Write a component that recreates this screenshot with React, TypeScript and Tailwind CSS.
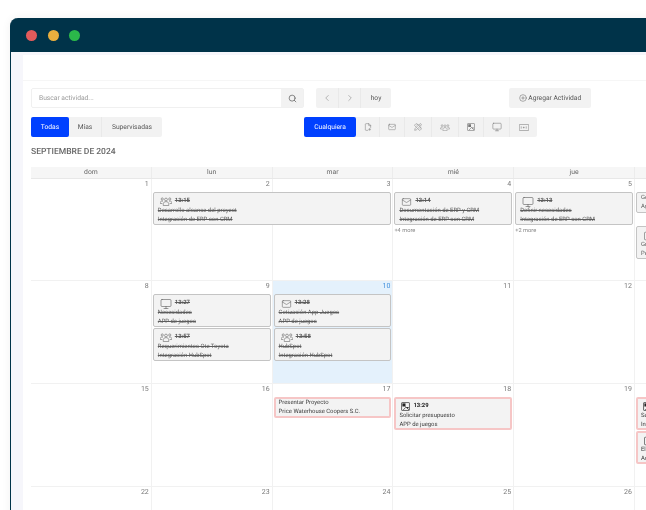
import React from "react";
import { ChevronLeft, ChevronRight, CirclePlus, Search, Mail, Monitor, FilePlus2, PencilRuler } from "lucide-react";

type IconKind = "group" | "mail" | "monitor" | "photo" | "doc";

function Group({ className }: { className?: string }) {
  return (
    <svg viewBox="0 0 24 18" fill="none" stroke="currentColor" strokeWidth="1.1" className={className}>
      <circle cx="12" cy="5" r="2.8" />
      <circle cx="4.5" cy="4" r="2.2" />
      <circle cx="19.5" cy="4" r="2.2" />
      <path d="M6.5 17v-3.5c0-2.6 2.4-4.2 5.5-4.2s5.500 1.600 5.500 4.200V17z" />
      <path d="M6 8.600C5.300 8.200 4.800 8 4 8c-2 0-3.500 1.400-3.500 3.400V13h4" />
      <path d="M18 8.600c.7-.4 1.200-.6 2-.6 2 0 3.500 1.400 3.500 3.400V13h-4" />
    </svg>
  );
}

function Photo({ className }: { className?: string }) {
  return (
    <svg viewBox="0 0 16 16" fill="none" stroke="currentColor" strokeWidth="1.2" className={className}>
      <rect x="1" y="1" width="14" height="14" rx="1" />
      <rect x="2.500" y="2.500" width="5.500" height="5.500" fill="currentColor" stroke="none" />
      <path d="M8 8l6 6M4 14l5-5" />
      <rect x="10" y="9" width="3.500" height="2" fill="currentColor" stroke="none" />
    </svg>
  );
}

function EventIcon({ kind }: { kind: IconKind }) {
  if (kind === "group") return <Group className="h-[9px] w-[12px]" />;
  if (kind === "mail") return <Mail className="h-[10px] w-[11px]" strokeWidth={1.3} />;
  if (kind === "monitor") return <Monitor className="h-[12px] w-[12px]" strokeWidth={1.2} />;
  if (kind === "photo") return <Photo className="h-[9px] w-[9px]" />;
  return <FilePlus2 className="h-[10px] w-[9px]" strokeWidth={1.5} />;
}

type Ev = {
  col: string;
  row: string;
  icon?: IconKind;
  time?: string;
  title: string;
  sub: string;
  done?: boolean;
  late?: boolean;
  self?: boolean;
};

function Event({ e }: { e: Ev }) {
  const pad = e.late
    ? e.icon
      ? "h-[33px] pl-[3px] pt-[2px]"
      : "h-[21px] pl-[3px] pt-0"
    : e.icon
      ? "h-[33px] pl-[4px] pt-[3px]"
      : "h-[21px] pl-[4px] pt-[1px]";
  return (
    <div
      className={`${e.col} ${e.row} z-10 ml-px mr-[2px] overflow-hidden whitespace-nowrap rounded-[2px] bg-[#f3f3f3] text-[5.900px] ${
        e.late
          ? "border-2 border-[#f6c6c6] text-[#3a3a3a]"
          : "border border-[#c4c4c4] text-[#5c5c5c]"
      } ${e.self ? "self-start" : ""} ${pad}`}
    >
      {e.icon && (
        <div className={`flex h-[11px] items-center gap-[3px] pl-[2px] ${e.late ? "text-[#222]" : "text-[#5c5c5c]"}`}>
          <EventIcon kind={e.icon} />
          <span className={`font-bold ${e.done ? "line-through" : ""}`}>{e.time}</span>
        </div>
      )}
      <div className={`h-[8.500px] leading-[8.500px] ${e.done ? "line-through" : ""}`}>{e.title}</div>
      <div className={`h-[8.500px] leading-[8.500px] ${e.done ? "line-through" : ""}`}>{e.sub}</div>
    </div>
  );
}

const colStarts = ["col-start-1", "col-start-2", "col-start-3", "col-start-4", "col-start-5", "col-start-6", "col-start-7"];

function Week({ days, events, more, today, first }: { days: number[]; events: Ev[]; more?: { col: string; text: string }[]; today?: number; first?: boolean }) {
  return (
    <div className={`grid ${first ? "h-[102px]" : "h-[103px]"} grid-cols-[repeat(7,120.8px)] grid-rows-[13px_34px_34px_1fr] border-b border-[#f1f1f1]`}>
      {days.map((d, i) => (
        <div
          key={d}
          className={`${colStarts[i]} row-start-1 row-end-5 border-r border-[#f1f1f1] pr-[2px] pt-[1px] text-right text-[7px] leading-[9px] ${
            today === d ? "bg-[#e4f1fc] text-[#3f8fdc]" : "text-[#777]"
          }`}
        >
          {d}
        </div>
      ))}
      {events.map((e, i) => (
        <Event key={i} e={e} />
      ))}
      {more?.map((m) => (
        <div key={m.text} className={`${m.col} row-start-3 z-10 pl-px pt-[1px] text-[5.700px] leading-[8px] text-[#888]`}>
          {m.text}
        </div>
      ))}
    </div>
  );
}

const erp = "Integración de ERP con CRM";
const hub = "Integración HubSpot";

function TabBtn({ children, className = "" }: { children: React.ReactNode; className?: string }) {
  return (
    <div className={`flex h-full items-center justify-center border-r border-[#e9e9e9] text-[#555] last:border-r-0 ${className}`}>
      {children}
    </div>
  );
}

export default function App() {
  return (
    <div className="h-[510px] w-[646px] overflow-hidden bg-white pl-[10px] pt-[18px] font-[family-name:Roboto,sans-serif] blur-[0.3px] [text-rendering:geometricPrecision]">
      <div className="h-[600px] w-[900px] overflow-hidden rounded-tl-[8px] border-l border-[#003349] bg-[#003349] shadow-[0_0_10px_rgba(0,0,0,0.06)]">
        <div className="flex h-[34px] items-center gap-[10.500px] pl-[15px]">
          <span className="size-[11px] rounded-full bg-[#e25b5b]" />
          <span className="size-[11px] rounded-full bg-[#e8ae3e]" />
          <span className="size-[11px] rounded-full bg-[#2bb84a]" />
        </div>
        <div className="h-full bg-[#f6f6fb] pl-[12px] pt-[3px]">
          <div className="h-full bg-white">
            <div className="h-[26px] border-b border-[#f6f6f6]" />
            <div className="pl-[8px] pt-[7px]">
              <div className="flex h-[20px] text-[6.700px] text-[#555]">
                <div className="flex w-[273px] rounded-[2px] border border-[#f0f0f0]">
                  <div className="flex-1 pl-[7px] leading-[18px] text-[#999]">Buscar actividad...</div>
                  <div className="flex w-[22px] items-center justify-center bg-[#f2f2f2]">
                    <Search className="size-[9px]" strokeWidth={1.8} />
                  </div>
                </div>
                <div className="ml-[12px] flex w-[75px] rounded-[2px] bg-[#f2f2f2]">
                  <TabBtn className="w-[23px]"><ChevronLeft className="size-[10px] text-[#777]" strokeWidth={1.2} /></TabBtn>
                  <TabBtn className="w-[22px]"><ChevronRight className="size-[10px] text-[#777]" strokeWidth={1.2} /></TabBtn>
                  <TabBtn className="w-[30px]">hoy</TabBtn>
                </div>
                <div className="ml-[118px] flex w-[82px] items-center justify-center gap-[1.500px] rounded-[2px] bg-[#f2f2f2]">
                  <CirclePlus className="size-[8px]" strokeWidth={1.4} />
                  Agregar Actividad
                </div>
              </div>

              <div className="mt-[9px] flex h-[20px] text-[6.700px]">
                <div className="flex w-[131px] rounded-[2px] bg-[#f2f2f2]">
                  <div className="flex w-[38px] items-center justify-center rounded-[2px] bg-[#0040ff] text-white">Todas</div>
                  <TabBtn className="w-[33px]">Mías</TabBtn>
                  <TabBtn className="w-[60px]">Supervisadas</TabBtn>
                </div>
                <div className="ml-[142px] flex w-[233px] rounded-[2px] bg-[#f2f2f2]">
                  <div className="flex w-[52px] items-center justify-center rounded-[2px] bg-[#0040ff] text-white">Cualquiera</div>
                  <TabBtn className="w-[24px]"><FilePlus2 className="size-[8px] text-[#777]" strokeWidth={1.5} /></TabBtn>
                  <TabBtn className="w-[25px]"><Mail className="size-[8px] text-[#777]" strokeWidth={1.4} /></TabBtn>
                  <TabBtn className="w-[27px]"><PencilRuler className="size-[8px] text-[#777]" strokeWidth={1.4} /></TabBtn>
                  <TabBtn className="w-[27px]"><Group className="h-[7px] w-[10px] text-[#777]" /></TabBtn>
                  <TabBtn className="w-[25px]"><Photo className="size-[8px] text-[#777]" /></TabBtn>
                  <TabBtn className="w-[26px]"><Monitor className="size-[10px] text-[#777]" strokeWidth={1.3} /></TabBtn>
                  <TabBtn className="w-[27px]">
                    <svg viewBox="0 0 18 12" fill="none" stroke="#777" strokeWidth="1" className="h-[7px] w-[10px]">
                      <rect x="0.500" y="0.500" width="17" height="11" rx="1" />
                      <path d="M4 4v4M7 6h3M8.500 4.500v3M13 4v4" />
                    </svg>
                  </TabBtn>
                </div>
              </div>

              <div className="mt-[10px] h-[11px] text-[8.500px] font-medium leading-[11px] text-[#666]">SEPTIEMBRE DE 2024</div>

              <div className="mt-[9px]">
                <div className="grid h-[12px] grid-cols-[repeat(7,120.8px)] border-b border-[#e8e8e8] bg-[#f6f6f6] text-center text-[6.800px] leading-[11px] text-[#666]">
                  {["dom", "lun", "mar", "mié", "jue", "vie", "sáb"].map((d) => (
                    <div key={d} className="border-r border-[#ececec]">{d}</div>
                  ))}
                </div>
                <Week
                  first
                  days={[1, 2, 3, 4, 5, 6, 7]}
                  more={[
                    { col: "col-start-4", text: "+4 more" },
                    { col: "col-start-5", text: "+2 more" },
                  ]}
                  events={[
                    { col: "col-start-2 col-end-4", row: "row-start-2", icon: "group", time: "13:15", title: "Desarrollo alcance del proyect", sub: erp, done: true },
                    { col: "col-start-4", row: "row-start-2", icon: "mail", time: "13:14", title: "Documentación de ERP y CRM", sub: erp, done: true },
                    { col: "col-start-5", row: "row-start-2", icon: "monitor", time: "13:13", title: "Definir necesidades", sub: erp, done: true },
                    { col: "col-start-6", row: "row-start-2", title: "Generar orden", sub: "Agencia", self: true },
                    { col: "col-start-6", row: "row-start-3", icon: "doc", time: "13:40", title: "Gran cierre", sub: "Petróleos" },
                  ]}
                />
                <Week
                  days={[8, 9, 10, 11, 12, 13, 14]}
                  today={10}
                  events={[
                    { col: "col-start-2", row: "row-start-2", icon: "monitor", time: "13:27", title: "Necesidades", sub: "APP de juegos", done: true },
                    { col: "col-start-3", row: "row-start-2", icon: "mail", time: "13:28", title: "Cotización App Juegos", sub: "APP de juegos", done: true },
                    { col: "col-start-2", row: "row-start-3", icon: "group", time: "13:57", title: "Requerimientos Ote Toyota", sub: hub, done: true },
                    { col: "col-start-3", row: "row-start-3", icon: "group", time: "13:58", title: "HubSpot", sub: hub, done: true },
                  ]}
                />
                <Week
                  days={[15, 16, 17, 18, 19, 20, 21]}
                  events={[
                    { col: "col-start-3", row: "row-start-2", title: "Presentar Proyecto", sub: "Price Waterhouse Coopers S.C.", late: true, self: true },
                    { col: "col-start-4", row: "row-start-2", icon: "photo", time: "13:29", title: "Solicitar presupuesto", sub: "APP de juegos", late: true },
                    { col: "col-start-6", row: "row-start-2", icon: "photo", time: "13:30", title: "Seguimiento", sub: hub, late: true },
                    { col: "col-start-6", row: "row-start-3", icon: "doc", time: "13:31", title: "Elaborar informe", sub: "Actualización", late: true },
                  ]}
                />
                <Week days={[22, 23, 24, 25, 26, 27, 28]} events={[]} />
              </div>
            </div>
          </div>
        </div>
      </div>
    </div>
  );
}
